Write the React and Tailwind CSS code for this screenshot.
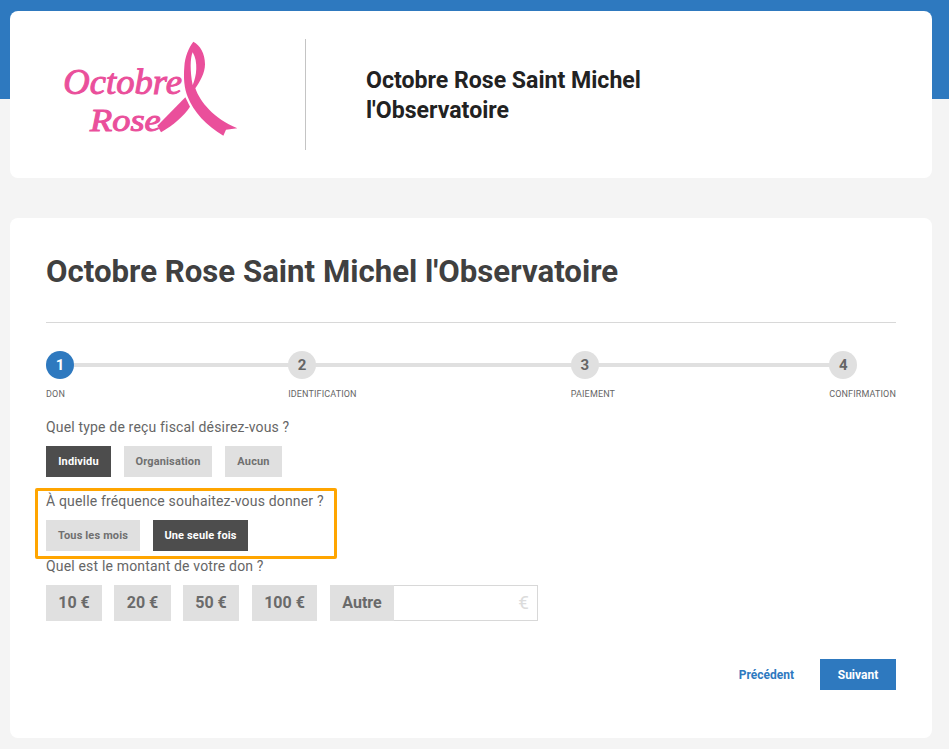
import React from "react";

const Logo = () => (
  <svg width="220" height="140" viewBox="0 0 660 420" fill="none" xmlns="http://www.w3.org/2000/svg">
    <path
      fillRule="evenodd"
      d="M460 65C480 75 495 100 495 133C495 160 480 185 466 205C480 245 520 295 592 325L558 329L550 347C500 317 460 275 443 230C433 205 430 175 433 140C435 110 445 85 460 65ZM458 97C450 115 450 155 458 195C470 170 475 125 458 97Z"
      fill="#ea4f9b"
    />
    <path d="M436 232L352 317L363 337C400 315 430 290 450 260Z" fill="#ea4f9b" />
    <text x="70" y="222" textLength="356" lengthAdjust="spacingAndGlyphs" fontFamily="'Liberation Serif', serif" fontStyle="italic" fontSize="110" fill="#ea4f9b" stroke="#ea4f9b" strokeWidth="3">
      Octobre
    </text>
    <text x="150" y="332" textLength="212" lengthAdjust="spacingAndGlyphs" fontFamily="'Liberation Serif', serif" fontStyle="italic" fontSize="96" fill="#ea4f9b" stroke="#ea4f9b" strokeWidth="3">
      Rose
    </text>
  </svg>
);

const steps = [
  { n: 1, label: "DON", active: true },
  { n: 2, label: "IDENTIFICATION" },
  { n: 3, label: "PAIEMENT" },
  { n: 4, label: "CONFIRMATION" },
];

const Stepper = () => (
  <div className="relative flex justify-between mt-[28px]">
    <div className="absolute left-0 right-[40px] top-[12px] h-[4px] bg-[#e0e0e0]"></div>
    {steps.map((s) => (
      <div key={s.n} className="relative flex flex-col items-start">
        <div
          className={`w-[28px] h-[28px] rounded-full flex items-center justify-center text-[15px] font-bold ${
            s.active ? "bg-[#2e79bf] text-white" : "bg-[#e0e0e0] text-[#666666]"
          }`}
        >
          {s.n}
        </div>
        <div className="mt-[10px] h-[10px] leading-[10px] text-[9px] tracking-[0.14px] text-[#666666] whitespace-nowrap">{s.label}</div>
      </div>
    ))}
  </div>
);

const Choice = ({ label, width, dark }) => (
  <button
    className={`h-[31px] pt-[1px] text-[11px] tracking-[0.15px] font-bold text-center ${width} ${dark ? "bg-[#4d4d4d] text-white" : "bg-[#e0e0e0] text-[#707070]"}`}
  >
    {label}
  </button>
);

const Amount = ({ label, width }) => (
  <button className={`h-[36px] bg-[#e0e0e0] text-[#6a6a6a] text-[16px] font-bold text-center ${width}`}>{label}</button>
);

export default function App() {
  return (
    <div className="min-h-[749px] bg-[#f4f4f4] font-[Roboto,sans-serif] overflow-hidden">
      <div className="h-[99px] bg-[#2e79bf]"></div>

      <div className="mx-[10px] w-[922px] -mt-[88px] h-[167px] bg-white rounded-lg flex items-center">
        <div className="ml-[30px] mb-[9px] w-[220px] shrink-0">
          <Logo />
        </div>
        <div className="ml-[45px] w-px h-[111px] bg-[#c4c4c4]"></div>
        <h2 className="ml-[60px] mt-[2px] w-[300px] text-[23.1px] leading-[30px] font-bold text-[#222222]">
          Octobre Rose Saint Michel l'Observatoire
        </h2>
      </div>

      <div className="mx-[10px] w-[922px] mt-[40px] h-[520px] bg-white rounded-lg px-[36px] pt-[34px]">
        <h1 className="text-[31.2px] leading-[40px] font-bold text-[#404040]">Octobre Rose Saint Michel l'Observatoire</h1>
        <div className="mt-[30px] h-px bg-[#d8d8d8]"></div>

        <Stepper />

        <p className="mt-[20px] text-[14px] leading-[16px] tracking-[0.17px] text-[#666666]">Quel type de reçu fiscal désirez-vous ?</p>
        <div className="mt-[11px] flex gap-[13px]">
          <Choice label="Individu" width="w-[65px]" dark />
          <Choice label="Organisation" width="w-[88px]" />
          <Choice label="Aucun" width="w-[57px]" />
        </div>

        <div className="mt-[11px] -ml-[11px] w-[302px] h-[71px] border-[3px] border-[#ffa500] rounded-[2px] pl-[8px] pt-[2px]">
          <p className="text-[14px] leading-[16px] tracking-[0.17px] text-[#666666]">À quelle fréquence souhaitez-vous donner ?</p>
          <div className="mt-[11px] flex gap-[13px]">
            <Choice label="Tous les mois" width="w-[94px]" />
            <Choice label="Une seule fois" width="w-[95px]" dark />
          </div>
        </div>

        <p className="-mt-[1px] text-[14px] leading-[16px] tracking-[0.17px] text-[#666666]">Quel est le montant de votre don ?</p>
        <div className="mt-[11px] flex items-stretch">
          <div className="flex gap-[12px]">
            <Amount label="10 €" width="w-[56px]" />
            <Amount label="20 €" width="w-[57px]" />
            <Amount label="50 €" width="w-[56px]" />
            <Amount label="100 €" width="w-[65px] ml-[1px]" />
          </div>
          <div className="ml-[13px] flex">
            <Amount label="Autre" width="w-[64px]" />
            <div className="w-[144px] h-[36px] border border-[#d8d8d8] border-l-0 flex items-center justify-end pr-[8px] text-[19px] text-[#dcdcdc]">€</div>
          </div>
        </div>

        <div className="mt-[38px] flex items-center justify-end">
          <button className="text-[12px] font-bold text-[#2e79bf] mr-[1px]">Précédent</button>
          <button className="ml-[25px] w-[76px] h-[31px] bg-[#2e79bf] text-white text-[12px] font-bold">Suivant</button>
        </div>
      </div>
    </div>
  );
}
